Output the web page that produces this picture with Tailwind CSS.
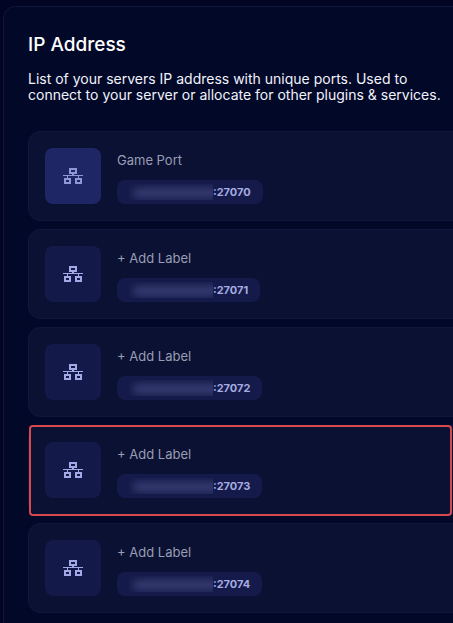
<!DOCTYPE html>
<html lang="en">
<head>
  <meta charset="UTF-8" />
  <meta name="viewport" content="width=device-width, initial-scale=1.0"/>
  <title>IP Address</title>
  <script src="https://cdn.jsdelivr.net/npm/@tailwindcss/browser@4"></script>
</head>
<body class="bg-[#010422] text-white font-['Inter',sans-serif] overflow-x-hidden">
  <!-- Network icon, shared by all rows -->
  <svg class="hidden">
    <symbol id="network" viewBox="0 0 20 20">
      <path d="M7 3h6v4H7zM2 13h5v4H2zM13 13h5v4h-5z" fill="none" stroke="currentColor" stroke-width="2"/>
      <path d="M0 9h20v1H0zM9 8h2v2H9zM4 10h1v2H4zM15 10h1v2h-1z" fill="currentColor"/>
    </symbol>
  </svg>

  <main class="overflow-hidden min-h-screen pt-1.5 pl-[3px]">
    <section class="-mr-4 min-h-screen rounded-tl-xl border border-[#10163a] bg-[#020828] pt-6 pl-6">
      <h1 class="text-[19px] leading-7 font-medium">IP Address</h1>
      <p class="mt-3 text-sm leading-4 text-[#f1f3fb]">
        List of your servers IP address with unique ports. Used to<br>
        connect to your server or allocate for other plugins &amp; services.
      </p>

      <ul id="ports" class="mt-7 space-y-2 pb-6"></ul>
    </section>
  </main>

  <script>
    const ports = [
      { label: "Game Port", port: 27070, primary: true },
      { label: "+ Add Label", port: 27071 },
      { label: "+ Add Label", port: 27072 },
      { label: "+ Add Label", port: 27073, marked: true },
      { label: "+ Add Label", port: 27074 },
    ];

    const list = document.getElementById("ports");

    ports.forEach(item => {
      const li = document.createElement("li");
      li.className = "relative flex gap-4 rounded-xl border border-[#11173a] bg-[#0b1132] p-4";
      const tile = item.primary ? "bg-[#1e2665] text-[#8f97d8]" : "bg-[#131949] text-[#a3a9e6]";
      li.innerHTML = `
        <div class="flex size-14 shrink-0 items-center justify-center rounded-lg ${tile}">
          <svg class="size-5" aria-hidden="true"><use href="#network"/></svg>
        </div>
        <div class="flex flex-col items-start justify-between">
          <button type="button" class="text-[13px] leading-6 text-[#989db5]">${item.label}</button>
          <div class="flex h-6 items-center overflow-hidden rounded-lg bg-[#141a4a] px-3 text-[11px] font-bold text-[#a6abe0]">
            <span class="h-4 w-[84px] overflow-hidden"><span class="mt-1 ml-1 block h-2.5 w-24 rounded bg-[#383e72] blur-xs"></span></span>
            <span>:${item.port}</span>
          </div>
        </div>
        ${item.marked ? '<div class="absolute -top-px right-[15px] -bottom-0.5 left-0 rounded border-2 border-[#d9474f]"></div>' : ''}`;
      list.appendChild(li);
    });
  </script>
</body>
</html>
